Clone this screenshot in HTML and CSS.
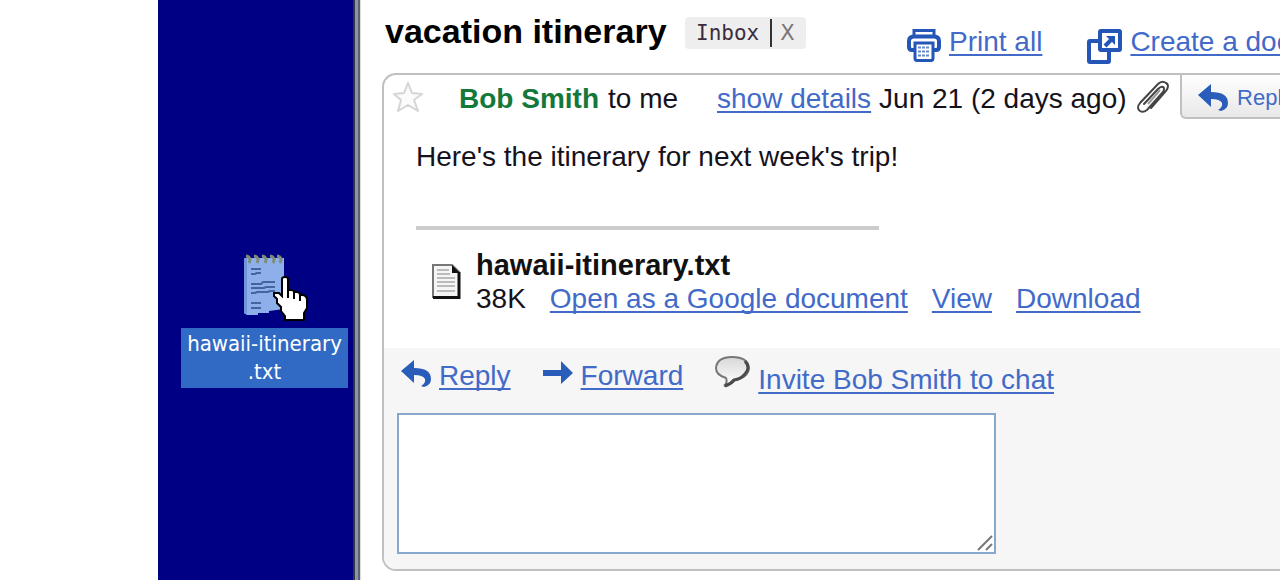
FILE: index.html
```html
<!DOCTYPE html>
<html lang="en">
  <head>
    <meta charset="UTF-8" />
    <meta name="viewport" content="width=device-width, initial-scale=1.0" />
    <title>vacation itinerary</title>
    <link rel="stylesheet" href="styles.css">
  </head>
  <body>
    <aside class="desktop">
      <div class="file">
        <div class="file-icon">
          <svg width="42" height="62" viewBox="0 0 42 62">
            <path d="M0 4H40V55L25 57V59H14V61H3L0 59Z" fill="#8db0ea" />
            <path d="M0 4H3V60L0 58Z" fill="#7095d8" />
            <g fill="none" stroke="#7f8c78" stroke-width="3">
              <path d="M2 2q6 1 3 7M10 2q6 1 3 7M18 2q6 1 3 7M26 2q6 1 3 7M33 2q6 1 3 7" />
            </g>
            <g fill="none" stroke="#45639c" stroke-width="2">
              <path d="M7 15h10M7 20h4l2-1h4M7 30h10l2-2h12M7 34h13l2-1h9M7 39h4l2-1h11l2-1h5M7 49h10M7 54h10" />
            </g>
          </svg>
          <!-- hand cursor -->
          <svg class="cursor" width="36" height="46" viewBox="0 0 36 46">
            <path d="M10 3q0-2 3-2t3 2v11h3q3 0 3 2h3q3 0 3 3h3q4 1 4 5v8l-3 5v7H13v-4l-4-5v-4l-4-4v-4l-3-3v-3h5l3 3Z" fill="#fff" stroke="#000" stroke-width="2" />
            <path d="M16 13v9M22 15v8M28 18v7" stroke="#000" stroke-width="2" />
          </svg>
        </div>
        <span class="file-name">hawaii-itinerary<br>.txt</span>
      </div>
    </aside>

    <main class="mail">
      <header class="subject">
        <h1>vacation itinerary</h1>
        <div class="label">
          <span>Inbox</span>
          <button class="remove" aria-label="Remove label">X</button>
        </div>
        <nav class="tools">
          <a href="#">
            <svg width="34" height="34" viewBox="0 0 34 34" fill="none" stroke="#2456b8">
              <path d="M7 7V1.5H27V7" stroke-width="3" />
              <path d="M7 21H5Q2 21 2 18V12Q2 7.500 7 7.500H27Q32 7.500 32 12V18Q32 21 29 21H27" stroke-width="4" />
              <path d="M8 14H26V29Q26 31.500 24 31.500H10Q8 31.500 8 29Z" fill="#fff" stroke-width="3" />
              <path d="M11 18.500H23M11 22.500H23M11 26.500H23" stroke-width="2" stroke-dasharray="3 1" stroke-opacity=".7" />
            </svg>
            <span>Print all</span>
          </a>
          <a href="#">
            <svg width="35" height="35" viewBox="0 0 35 35" fill="none" stroke="#2456b8">
              <rect x="2" y="12" width="20" height="21" rx="1" stroke-width="4" />
              <rect x="13" y="2" width="20" height="19" rx="1" fill="#fff" stroke-width="4" />
              <path d="M18 17L25 10" stroke-width="4" />
              <path d="M19 7H28V16Z" fill="#2456b8" stroke="none" />
            </svg>
            <span>Create a document</span>
          </a>
        </nav>
      </header>

      <article class="card">
        <div class="card-head">
          <button class="star" aria-label="Star">
            <svg width="32" height="32" viewBox="0 0 32 32">
              <path d="M16 2L20 12L30 13L22 19L26 30L16 24L6 30L9 19L2 13L12 12Z" fill="#fbfbfb" stroke="#d5d5d5" stroke-width="2" stroke-linejoin="round" />
            </svg>
          </button>
          <b class="sender">Bob Smith</b>
          <span class="to">to me</span>
          <a class="details" href="#">show details</a>
          <span class="date">Jun 21 (2 days ago)</span>
          <svg class="clip" width="34" height="34" viewBox="0 0 34 34" fill="none">
            <path d="M15 28L30 11Q34 5 30 3Q26 0 22 4L4 23Q0 28 4 31Q7 33 11 30L27 12Q29 8 27 7Q25 6 22 9L8 24" stroke="#444" stroke-width="2" stroke-linecap="round" />
            <path d="M12 24L24 10" stroke="#999" stroke-width="2" />
          </svg>
          <button class="reply-btn">
            <svg width="30" height="28" viewBox="0 0 30 28" fill="#2a5cba">
              <path d="M0 11L13 0V8Q30 8 30 19Q30 25 23 27L20 26Q25 23 24 19Q22 15 13 15V23Z" />
            </svg>
            Reply
          </button>
        </div>

        <div class="message">
          <p>Here's the itinerary for next week's trip!</p>
          <hr>
          <div class="attachment">
            <svg width="29" height="35" viewBox="0 0 29 35">
              <path d="M1 1H20L27 8V33H1Z" fill="#f5f5f5" stroke="#777" stroke-width="2" />
              <path d="M27 8V33.500H1" fill="none" stroke="#111" stroke-width="3" />
              <path d="M20 1L28 9H20Z" fill="#111" />
              <path d="M5 6H17M5 10H18M5 14H23M5 18H23M5 22H23M5 27H23" stroke="#bbb" stroke-width="2" />
            </svg>
            <div>
              <b class="attachment-name">hawaii-itinerary.txt</b>
              <div class="attachment-links">
                <span>38K</span>
                <a href="#">Open as a Google document</a>
                <a href="#">View</a>
                <a href="#">Download</a>
              </div>
            </div>
          </div>
        </div>

        <footer class="respond">
          <div class="actions">
            <a href="#">
              <svg width="30" height="28" viewBox="0 0 30 28" fill="#2a5cba">
                <path d="M0 11L13 0V8Q30 8 30 19Q30 25 23 27L20 26Q25 23 24 19Q22 15 13 15V23Z" />
              </svg>
              <span>Reply</span>
            </a>
            <a href="#">
              <svg width="30" height="28" viewBox="0 0 30 28" fill="#2a5cba">
                <path d="M0 10H18V1L30 13L18 24V16H0Z" />
              </svg>
              <span>Forward</span>
            </a>
            <a class="chat" href="#">
              <svg width="35" height="32" viewBox="0 0 35 32">
                <defs>
                  <linearGradient id="bubble" x1="0" y1="0" x2="0" y2="1">
                    <stop offset="0" stop-color="#d8d8d8" />
                    <stop offset="1" stop-color="#ffffff" />
                  </linearGradient>
                </defs>
                <path d="M11 22Q1 19 1 12Q2 1 17 1Q33 1 34 12Q33 22 20 24Q17 28 9 30Q13 27 11 22Z" fill="url(#bubble)" stroke="#777" stroke-width="2" />
                <path d="M30 5Q36 12 30 18Q26 23 19 24Q16 28 10 30" fill="none" stroke="#4b4b4b" stroke-width="3" />
              </svg>
              <span>Invite Bob Smith to chat</span>
            </a>
          </div>
          <div class="reply-box">
            <textarea aria-label="Reply"></textarea>
            <svg class="grip" width="16" height="16" viewBox="0 0 16 16" stroke="#777" stroke-width="2">
              <path d="M1 15L15 1M9 15L15 9" />
            </svg>
          </div>
        </footer>
      </article>
    </main>
  </body>
</html>
```

FILE: styles.css
```css
* {
  box-sizing: border-box;
}

body {
  margin: 0;
  min-height: 100vh;
  display: flex;
  background: #fff;
  color: #16121c;
  font-family: "Liberation Sans", Arial, sans-serif;
  font-size: 28px;
  line-height: 32px;
  overflow-x: hidden;
}

h1,
p {
  margin: 0;
}

svg {
  display: block;
  flex-shrink: 0;
}

a {
  color: #426ac9;
  text-decoration-thickness: 2px;
  text-underline-offset: 3px;
  text-decoration-skip-ink: none;
}

button {
  padding: 0;
  border: 0;
  background: none;
  font-family: inherit;
  cursor: pointer;
}

/* desktop */
.desktop {
  flex: none;
  width: 195px;
  margin-left: 158px;
  padding: 254px 4px 0 22px;
  background: #000084;
}

.file {
  display: flex;
  flex-direction: column;
  align-items: center;
  gap: 12px;
}

.file-icon {
  position: relative;
}

.cursor {
  position: absolute;
  left: 28px;
  top: 22px;
}

.file-name {
  width: 167px;
  padding: 2px 0;
  background: #316ac5;
  color: #fff;
  font-family: "DejaVu Sans Condensed", "DejaVu Sans", sans-serif;
  font-size: 22px;
  line-height: 28px;
  text-align: center;
  white-space: nowrap;
}

/* mail, the gradient is the window frame */
.mail {
  flex: 1;
  min-width: 0;
  padding-left: 29px;
  background: linear-gradient(to right, #30343f 2px, #8a96a3 2px, #8a96a3 5px, #596173 5px, #596173 7px, #ddd 7px, #ddd 8px, #fff 8px);
  overflow: hidden;
  white-space: nowrap;
}

.subject {
  display: flex;
  align-items: flex-start;
  height: 73px;
  padding: 11px 0 0 3px;
}

.subject h1 {
  width: 300px;
  flex: none;
  color: #000;
  font-size: 34px;
  line-height: 40px;
}

.label {
  display: flex;
  align-items: center;
  flex: none;
  width: 121px;
  height: 32px;
  margin-top: 6px;
  padding-left: 11px;
  background: #eee;
  border-radius: 4px;
  font-family: "DejaVu Sans Mono", monospace;
  font-size: 21px;
  color: #3c2c3c;
}

.remove {
  height: 28px;
  margin-left: 11px;
  padding-left: 8px;
  border-left: 2px solid #333;
  color: #777;
  font-family: "DejaVu Sans", sans-serif;
  font-size: 21px;
}

.tools {
  display: flex;
  gap: 45px;
  margin: 15px 0 0 101px;
}

.tools a,
.actions a {
  display: flex;
  gap: 8px;
  text-decoration: none;
}

.tools svg {
  margin-top: 3px;
}

.tools span,
.actions span {
  text-decoration: underline;
  text-decoration-thickness: 2px;
  text-underline-offset: 3px;
  text-decoration-skip-ink: none;
}

.card {
  border: 2px solid #c0c0c0;
  border-right: 0;
  border-radius: 14px 0 0 14px;
  overflow: hidden;
}

.card-head {
  display: flex;
  align-items: flex-start;
  padding-left: 8px;
}

.card-head > * {
  flex: none;
  margin-top: 8px;
}

.card-head .star {
  width: 67px;
  margin-top: 6px;
}

.sender {
  width: 149px;
  color: #14783a;
}

.to {
  width: 109px;
}

.details {
  margin-right: 8px;
}

.date {
  width: 257px;
}

.card-head .clip {
  margin-top: 5px;
}

.card-head .reply-btn {
  display: flex;
  align-items: center;
  gap: 9px;
  width: 130px;
  height: 44px;
  margin: 0 0 0 10px;
  padding: 4px 0 0 16px;
  border: 2px solid #c0c0c0;
  border-top: 0;
  border-bottom-left-radius: 6px;
  background: linear-gradient(#fff, #e8e8e8);
  color: #426ac9;
  font-size: 22px;
}

.message {
  padding: 22px 32px 32px;
}

.message hr {
  width: 463px;
  height: 4px;
  margin: 53px 0 18px;
  border: 0;
  background: #ccc;
}

.attachment {
  display: flex;
  gap: 15px;
  padding-left: 16px;
  line-height: 34px;
}

.attachment svg {
  margin-top: 16px;
}

.attachment-name {
  display: block;
  color: #111;
  font-size: 29px;
}

.attachment-links {
  display: flex;
  gap: 24px;
}

.respond {
  padding: 8px 13px 15px;
  background: #f6f6f6;
}

.actions {
  display: flex;
  gap: 32px;
  height: 57px;
  padding-left: 4px;
}

.actions a {
  padding-top: 4px;
}

.actions .chat {
  padding-top: 0;
}

.actions .chat span {
  padding-top: 8px;
}

.reply-box {
  position: relative;
  max-width: 599px;
}

.reply-box textarea {
  display: block;
  width: 100%;
  height: 141px;
  padding: 8px;
  border: 2px solid #86a9cc;
  background: #fff;
  font: inherit;
  resize: none;
}

.grip {
  position: absolute;
  right: 3px;
  bottom: 3px;
}
```
